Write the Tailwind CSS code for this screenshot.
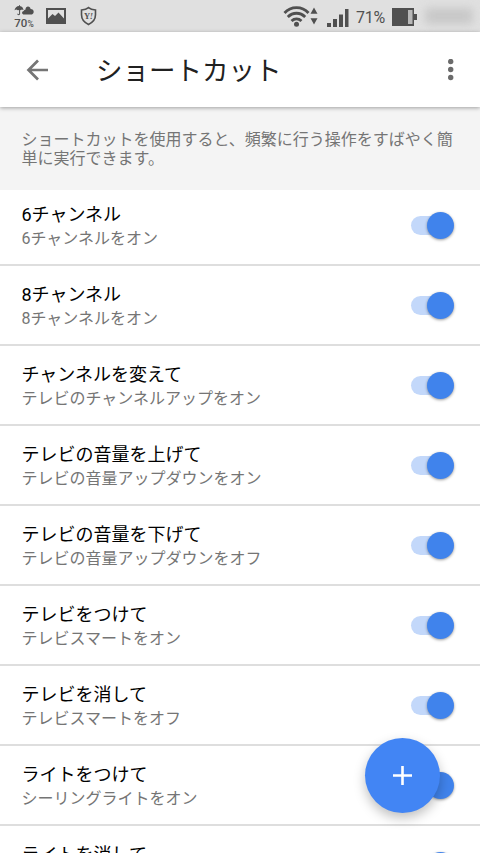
<!DOCTYPE html>
<html lang="ja">
<head>
  <meta charset="UTF-8" />
  <meta name="viewport" content="width=device-width, initial-scale=1.0" />
  <title>ショートカット</title>
  <script src="https://cdn.jsdelivr.net/npm/@tailwindcss/browser@4"></script>
</head>
<body class="relative h-[853px] w-[480px] overflow-hidden bg-white font-['Roboto','Noto_Sans_CJK_JP',sans-serif]">

  <!-- Status bar -->
  <div class="flex h-8 items-center justify-between bg-[#e0e0e0] pl-[14px] pr-[7px] text-[#505050]">
    <div class="flex items-center">
      <div class="mt-px flex w-5 flex-col items-center">
        <svg class="h-[11px] w-5" viewBox="0 0 20 11" fill="currentColor">
          <path d="M0.500 5.200C1 2.500 2.800 1 5 0.900V0h0.800v0.900C8 1.100 9.300 2.800 9.600 5.200L8 4.400l-1.600 0.800-0.300-0.300v3.900c0 1.900-2.900 1.900-2.900 0h1c0 0.600 0.900 0.600 0.900 0V4.900L3.900 5.200 2.200 4.400z" />
          <path d="M10.300 9.600C7.500 9.600 7.400 6.400 9.800 6c0.200-0.800 0.800-1.300 1.600-1.300C11.600 2.500 12.700 1.500 14 1.500c1.500 0 2.400 1 2.600 2.400 2 0 3.100 1.300 3.100 2.800 0 1.700-1.200 2.900-2.900 2.900z" />
        </svg>
        <div class="mt-[2px] text-[11.500px] leading-[10px] font-medium whitespace-nowrap">70<span class="text-[8.500px]">%</span></div>
      </div>
      <svg class="ml-3 h-4 w-5" viewBox="0 0 20 16" fill="currentColor">
        <path fill-rule="evenodd" d="M0 0h20v16H0zM2 2v8.500l4.500-4.500 2.500 2 3.500-3.500 5.500 6V2z" />
      </svg>
      <svg class="ml-3.5 h-5 w-[17px]" viewBox="0 0 18 20" fill="none" stroke="currentColor">
        <path d="M9 1.200C7.200 2.800 4.600 3.500 1.600 3.600v5.200c0 4.500 2.600 8 7.400 10.200 4.800-2.200 7.400-5.700 7.400-10.200V3.600C13.400 3.500 10.800 2.800 9 1.200z" stroke-width="1.700" />
        <text x="4.300" y="12.800" font-family="Liberation Serif" font-size="9" font-weight="bold" fill="currentColor" stroke="none">Y<tspan dx="-0.500" font-style="italic">!</tspan></text>
      </svg>
    </div>
    <div class="flex items-center">
      <svg class="h-[23px] w-[27px]" viewBox="0 0 27 23" fill="none" stroke="currentColor" stroke-width="2.800">
        <path d="M1.500 8C8 0.800 19 0.800 25.500 8" />
        <path d="M4.800 12c5-5 12.400-5 17.400 0" />
        <path d="M8.500 16c3-2.800 7-2.800 10 0" />
        <circle cx="13.500" cy="19.300" r="2.500" fill="currentColor" stroke="none" />
      </svg>
      <svg class="h-[18px] w-2" viewBox="0 0 8 18" fill="currentColor">
        <path d="M4 0.500l3.500 6.300h-7zM4 17.500L0.500 11.300h7z" />
      </svg>
      <svg class="mt-[3px] ml-[9px] h-5 w-[22px]" viewBox="0 0 22 20" fill="currentColor">
        <path d="M0 15h4v4H0zM6 11h4v8H6zM12 6.500h4V19h-4zM18 1h3.500v18H18z" />
      </svg>
      <span class="mt-[3px] ml-[7px] w-[31px] text-[16px] leading-none tracking-[-0.200px]">71%</span>
      <svg class="mt-px ml-[5px] h-[18px] w-[25px]" viewBox="0 0 25 18" fill="currentColor">
        <path d="M0 0h22v18H0zM22 6h3v6h-3z" />
        <path d="M16 2h4.500v14H16z" fill="#b8b8b8" />
      </svg>
      <div class="ml-2 h-4 w-12 rounded bg-[#c8c8c8] blur-[4px]"></div>
    </div>
  </div>

  <!-- App bar -->
  <header class="relative z-10 flex h-[75px] items-center bg-white pl-[26px] pr-[19px] shadow-[0_1px_4px_rgba(0,0,0,0.35)]">
    <svg class="h-[22px] w-[22px]" viewBox="0 0 22 22" fill="none" stroke="#757575" stroke-width="2.700">
      <path d="M22 11H3M12 1.500L2.500 11l9.500 9.500" />
    </svg>
    <h1 class="ml-[48px] pt-[3px] text-[26.500px] leading-none text-[#212121]">ショートカット</h1>
    <svg class="ml-auto h-[22px] w-5" viewBox="0 0 20 22" fill="#6b6b6b">
      <circle cx="9.700" cy="2.500" r="2.700" />
      <circle cx="9.700" cy="10.500" r="2.700" />
      <circle cx="9.700" cy="18.500" r="2.700" />
    </svg>
  </header>

  <p class="relative h-[83px] bg-[#f4f4f4] pt-[23px] pl-[21.500px] pr-[20px] text-base leading-[19px] text-[#757575]">ショートカットを使用すると、頻繁に行う操作をすばやく簡<br />単に実行できます。</p>

  <!-- Shortcut list, rows are filled in below -->
  <ul id="list" class="-mt-1"></ul>

  <template id="row">
    <li class="flex h-20 items-center justify-between border-b-2 border-[#dedede] pl-[21.500px] pr-[26px]">
      <div class="pt-1">
        <div class="name text-lg leading-6 text-black"></div>
        <div class="action text-base leading-6 text-[#757575]"></div>
      </div>
      <div class="flex h-[27px] w-[43px] items-center justify-end">
        <div class="-mr-5 h-[19px] w-9 rounded-full bg-[#c3d8fa]"></div>
        <div class="relative h-[27px] w-[27px] shrink-0 rounded-full bg-[#4083ec] shadow-[0_1px_3px_rgba(0,0,0,0.4)]"></div>
      </div>
    </li>
  </template>

  <button class="absolute top-[738px] left-[365px] flex h-[75px] w-[75px] items-center justify-center rounded-full bg-[#4285f4] shadow-[0_5px_12px_rgba(0,0,0,0.25)]">
    <svg class="h-[19px] w-[19px]" viewBox="0 0 19 19" stroke="#fff" stroke-width="2.600">
      <path d="M9.500 0v19M0 9.500h19" />
    </svg>
  </button>

  <script>
    const shortcuts = [
      ["6チャンネル", "6チャンネルをオン"],
      ["8チャンネル", "8チャンネルをオン"],
      ["チャンネルを変えて", "テレビのチャンネルアップをオン"],
      ["テレビの音量を上げて", "テレビの音量アップダウンをオン"],
      ["テレビの音量を下げて", "テレビの音量アップダウンをオフ"],
      ["テレビをつけて", "テレビスマートをオン"],
      ["テレビを消して", "テレビスマートをオフ"],
      ["ライトをつけて", "シーリングライトをオン"],
      ["ライトを消して", ""],
    ];

    const list = document.getElementById("list");
    const row = document.getElementById("row");

    shortcuts.forEach(([name, action]) => {
      const item = row.content.cloneNode(true);
      item.querySelector(".name").textContent = name;
      item.querySelector(".action").textContent = action || "\u00a0";
      list.appendChild(item);
    });
  </script>
</body>
</html>
